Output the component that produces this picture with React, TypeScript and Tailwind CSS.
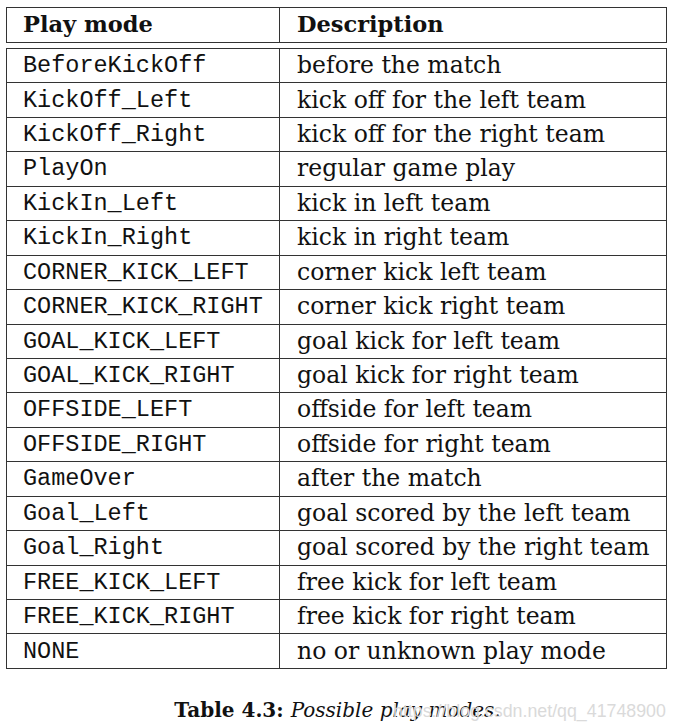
import React from "react";

const rows: [string, string][] = [
  ["BeforeKickOff", "before the match"],
  ["KickOff_Left", "kick off for the left team"],
  ["KickOff_Right", "kick off for the right team"],
  ["PlayOn", "regular game play"],
  ["KickIn_Left", "kick in left team"],
  ["KickIn_Right", "kick in right team"],
  ["CORNER_KICK_LEFT", "corner kick left team"],
  ["CORNER_KICK_RIGHT", "corner kick right team"],
  ["GOAL_KICK_LEFT", "goal kick for left team"],
  ["GOAL_KICK_RIGHT", "goal kick for right team"],
  ["OFFSIDE_LEFT", "offside for left team"],
  ["OFFSIDE_RIGHT", "offside for right team"],
  ["GameOver", "after the match"],
  ["Goal_Left", "goal scored by the left team"],
  ["Goal_Right", "goal scored by the right team"],
  ["FREE_KICK_LEFT", "free kick for left team"],
  ["FREE_KICK_RIGHT", "free kick for right team"],
  ["NONE", "no or unknown play mode"],
];

const serif = "font-['DejaVu_Serif',serif]";
const mono = "font-['Liberation_Mono',monospace]";

export default function App() {
  return (
    <div className="w-[675px] h-[726px] bg-white relative text-[#111]">
      <div className="pt-[7px] pl-[6px] w-[667px]">
        <div className="flex h-[36px] border border-[#333]">
          <div className={`w-[273px] shrink-0 border-r border-[#333] pl-[16px] flex items-center font-bold text-[22.5px] ${serif}`}>
            Play mode
          </div>
          <div className={`pl-[17px] flex items-center font-bold text-[22.5px] ${serif}`}>Description</div>
        </div>
        <div className="mt-[5px] border-t border-x border-[#333]">
          {rows.map(([a, b]) => (
            <div key={a} className="flex h-[34.44px] border-b border-[#333]">
              <div className={`w-[273px] shrink-0 border-r border-[#333] pl-[16px] flex items-center text-[23.5px] ${mono}`}>
                {a}
              </div>
              <div className={`pl-[17px] flex items-center text-[23.5px] ${serif}`}>{b}</div>
            </div>
          ))}
        </div>
      </div>
      <div className={`mt-[26px] flex justify-center text-[20px] ${serif}`}>
        <span className="font-bold">Table 4.3:</span>
        <span className="italic ml-[7px]">Possible play modes.</span>
      </div>
      <div className="absolute left-[393px] top-[698px] text-[17.8px] text-[#dadada] font-['Liberation_Sans',sans-serif] pointer-events-none">
        https://blog.csdn.net/qq_41748900
      </div>
    </div>
  );
}
